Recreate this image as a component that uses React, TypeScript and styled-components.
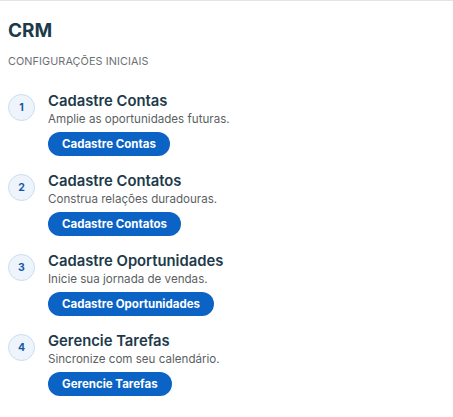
import React, { ReactElement } from 'react';
import styled, { createGlobalStyle } from 'styled-components';

const GlobalStyle = createGlobalStyle`
  html, body {
    margin: 0;
    padding: 0;
    background: #ffffff;
  }
  * {
    box-sizing: border-box;
  }
`;

interface Step {
  title: string;
  description: string;
  action: string;
}

const STEPS: Step[] = [
  {
    title: 'Cadastre Contas',
    description: 'Amplie as oportunidades futuras.',
    action: 'Cadastre Contas',
  },
  {
    title: 'Cadastre Contatos',
    description: 'Construa relações duradouras.',
    action: 'Cadastre Contatos',
  },
  {
    title: 'Cadastre Oportunidades',
    description: 'Inicie sua jornada de vendas.',
    action: 'Cadastre Oportunidades',
  },
  {
    title: 'Gerencie Tarefas',
    description: 'Sincronize com seu calendário.',
    action: 'Gerencie Tarefas',
  },
];

const Container = styled.div`
  width: 453px;
  min-height: 417px;
  border-top: 1px solid #e4e4e4;
  padding: 17px 8px 0 8px;
  font-family: Inter, 'Open Sans', sans-serif;
`;

const Title = styled.h1`
  margin: 0;
  font-size: 19px;
  line-height: 26px;
  font-weight: 700;
  color: #1d3a4b;
`;

const Subtitle = styled.div`
  margin-top: 11px;
  font-size: 10.8px;
  line-height: 14px;
  font-weight: 400;
  color: #6b7075;
  letter-spacing: 0.1px;
`;

const StepList = styled.ol`
  list-style: none;
  margin: 23px 0 0 0;
  padding: 0;
  display: flex;
  flex-direction: column;
  gap: 16px;
`;

const StepRow = styled.li`
  display: flex;
  align-items: flex-start;
  gap: 13px;
`;

const NumberBadge = styled.div`
  flex: none;
  width: 27px;
  height: 27px;
  margin-top: 2px;
  border-radius: 50%;
  background: #eef4fc;
  border: 1.5px solid #c9dcf2;
  display: flex;
  align-items: center;
  justify-content: center;
  font-size: 10.5px;
  font-weight: 700;
  color: #1557a8;
`;

const StepBody = styled.div`
  display: flex;
  flex-direction: column;
  align-items: flex-start;
`;

const StepTitle = styled.div`
  font-size: 14.8px;
  line-height: 18px;
  font-weight: 600;
  color: #1d3a4b;
`;

const StepText = styled.div`
  margin-top: 1px;
  font-size: 11.6px;
  line-height: 16px;
  color: #5b5f63;
`;

const ActionButton = styled.button`
  margin-top: 5px;
  height: 24px;
  padding: 0 14px;
  border: none;
  border-radius: 12px;
  background: #0b63c5;
  color: #ffffff;
  font-family: inherit;
  font-size: 11.5px;
  font-weight: 700;
  cursor: pointer;
`;

function App(): ReactElement {
  return (
    <>
      <GlobalStyle />
      <Container>
        <Title>CRM</Title>
        <Subtitle>CONFIGURAÇÕES INICIAIS</Subtitle>
        <StepList>
          {STEPS.map((step, index) => (
            <StepRow key={step.title}>
              <NumberBadge>{index + 1}</NumberBadge>
              <StepBody>
                <StepTitle>{step.title}</StepTitle>
                <StepText>{step.description}</StepText>
                <ActionButton>{step.action}</ActionButton>
              </StepBody>
            </StepRow>
          ))}
        </StepList>
      </Container>
    </>
  );
}

export default App;
